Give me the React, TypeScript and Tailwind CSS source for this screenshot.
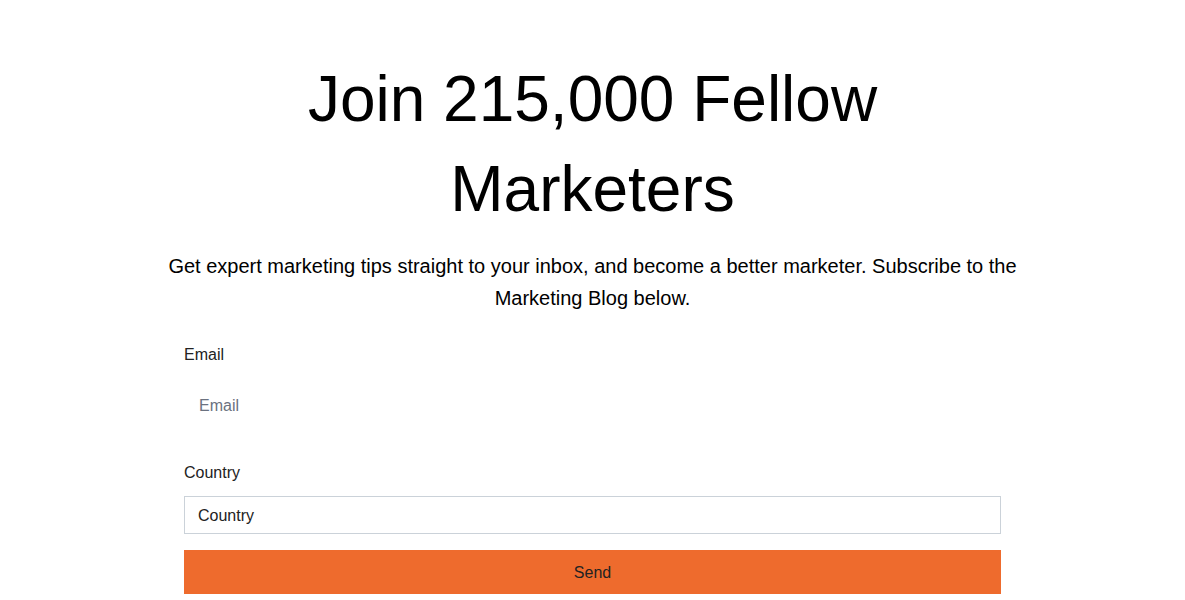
export default function App() {
  return (
    <div className="min-h-screen bg-white text-black" style={{ fontFamily: '"Liberation Sans", Arial, sans-serif' }}>
      <div className="mx-auto flex w-full flex-col items-center pt-[54px]">
        <h1 className="text-center text-[64px] font-normal leading-[90px] text-black">
          Join 215,000 Fellow
          <br />
          Marketers
        </h1>
        <p className="mt-[16px] w-[880px] text-center text-[20px] leading-[32px] text-black">
          Get expert marketing tips straight to your inbox, and become a better marketer. Subscribe to the Marketing Blog below.
        </p>
        <form className="mt-[29px] flex w-[817px] flex-col" onSubmit={(e) => e.preventDefault()}>
          <label className="text-[16px] leading-[24px] text-[#222]">Email</label>
          <input
            type="email"
            placeholder="Email"
            className="mt-[20px] h-[38px] w-full border-0 px-[15px] text-[16px] text-[#222] outline-none placeholder:text-[#6b7280]"
          />
          <label className="mt-[36px] text-[16px] leading-[24px] text-[#222]">Country</label>
          <input
            type="text"
            defaultValue="Country"
            className="mt-[11px] h-[38px] w-full border border-[#cbd2d9] px-[13px] pt-[2px] text-[16px] text-[#222] outline-none"
          />
          <button
            type="submit"
            className="mt-[16px] h-[44px] w-full bg-[#ee6b2d] pt-[2px] text-[16px] text-[#222]"
          >
            Send
          </button>
        </form>
      </div>
    </div>
  );
}
